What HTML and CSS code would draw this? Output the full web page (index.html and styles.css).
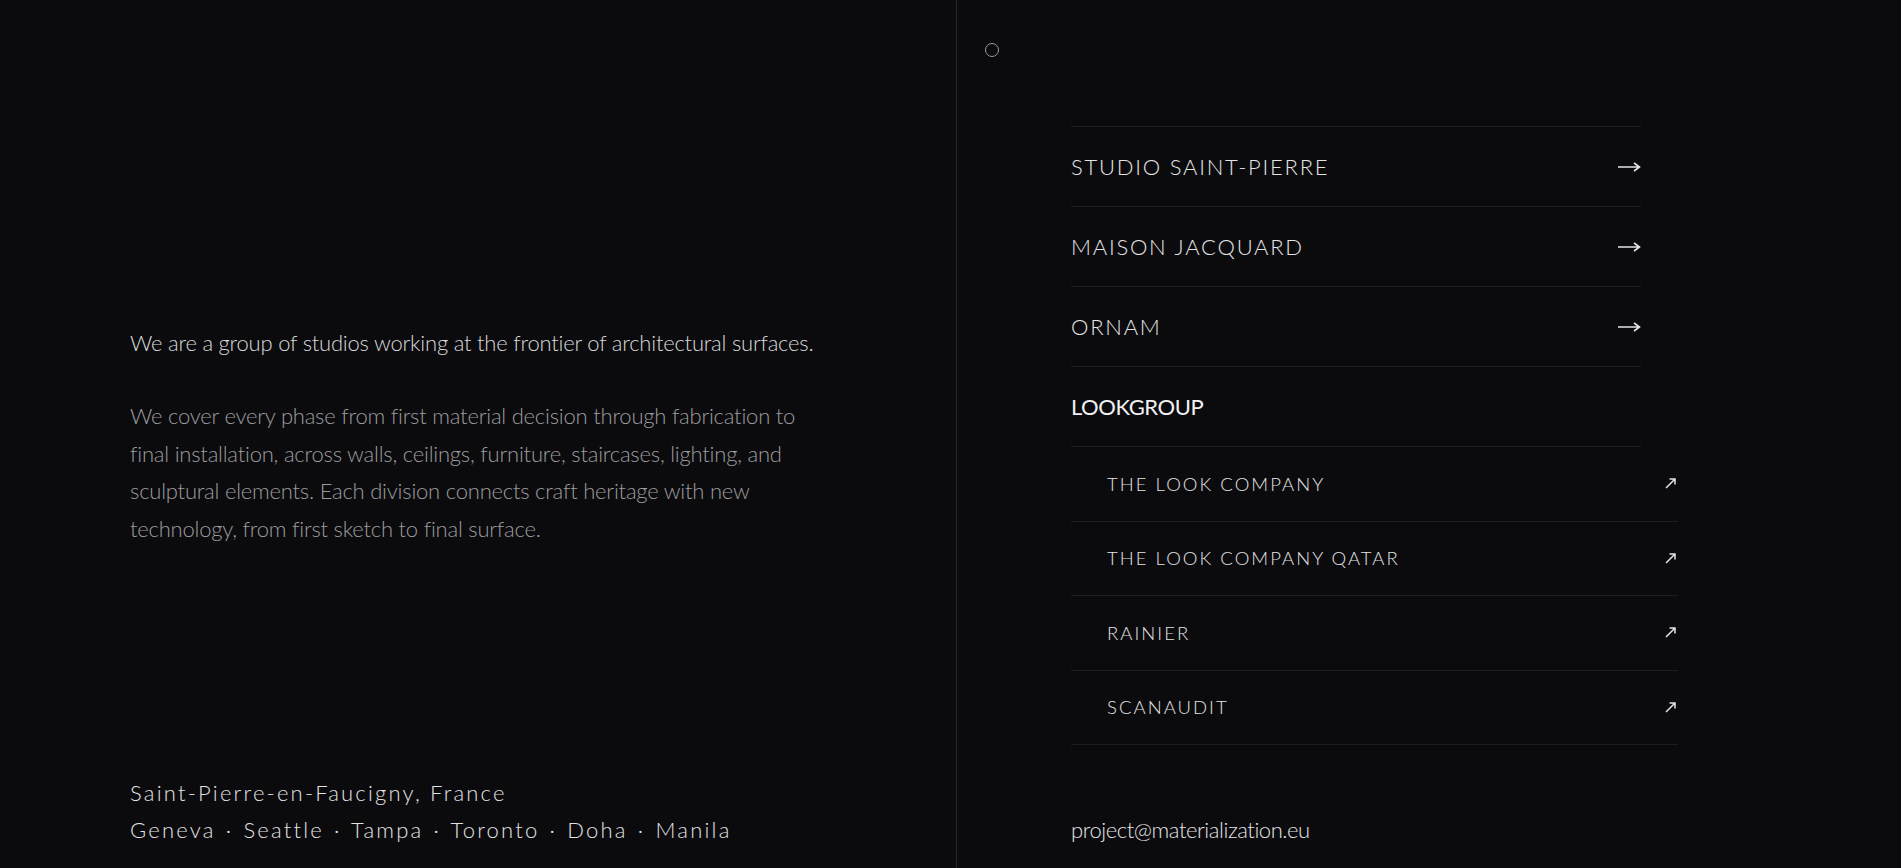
FILE: index.html
```html
<!DOCTYPE html>
<html lang="en">
<head>
<meta charset="utf-8">
<title>Materialization</title>
<link rel="stylesheet" href="styles.css">
</head>
<body>
<div class="page">
  <section class="left">
    <div class="intro">
      <p class="lead">We are a group of studios working at the frontier of architectural surfaces.</p>
      <p class="body-text">We cover every phase from first material decision through fabrication to final installation, across walls, ceilings, furniture, staircases, lighting, and sculptural elements. Each division connects craft heritage with new technology, from first sketch to final surface.</p>
    </div>
    <div class="locations">
      <div class="hq">Saint-Pierre-en-Faucigny, France</div>
      <div class="cities">Geneva · Seattle · Tampa · Toronto · Doha · Manila</div>
    </div>
  </section>
  <section class="right">
    <span class="dot"></span>
    <nav class="studios">
      <a class="studio-row" href="#"><span class="studio-name">STUDIO SAINT-PIERRE</span>
        <svg class="arrow" width="23" height="10" viewBox="0 0 23 10"><path d="M0 5H21.5M16 1L21.5 5L16 9" fill="none" stroke="#e4e4e4" stroke-width="1.6"/></svg></a>
      <a class="studio-row" href="#"><span class="studio-name">MAISON JACQUARD</span>
        <svg class="arrow" width="23" height="10" viewBox="0 0 23 10"><path d="M0 5H21.5M16 1L21.5 5L16 9" fill="none" stroke="#e4e4e4" stroke-width="1.6"/></svg></a>
      <a class="studio-row" href="#"><span class="studio-name">ORNAM</span>
        <svg class="arrow" width="23" height="10" viewBox="0 0 23 10"><path d="M0 5H21.5M16 1L21.5 5L16 9" fill="none" stroke="#e4e4e4" stroke-width="1.6"/></svg></a>
      <div class="group-row"><span class="group-name">LOOKGROUP</span></div>
      <div class="sublist">
        <a class="sub-row" href="#"><span class="sub-name">THE LOOK COMPANY</span>
          <svg class="ext" width="11" height="11" viewBox="0 0 11 11"><path d="M1 10L10 1M4.5 1H10V6.5" fill="none" stroke="#e4e4e4" stroke-width="1.5"/></svg></a>
        <a class="sub-row" href="#"><span class="sub-name">THE LOOK COMPANY QATAR</span>
          <svg class="ext" width="11" height="11" viewBox="0 0 11 11"><path d="M1 10L10 1M4.5 1H10V6.5" fill="none" stroke="#e4e4e4" stroke-width="1.5"/></svg></a>
        <a class="sub-row" href="#"><span class="sub-name">RAINIER</span>
          <svg class="ext" width="11" height="11" viewBox="0 0 11 11"><path d="M1 10L10 1M4.5 1H10V6.5" fill="none" stroke="#e4e4e4" stroke-width="1.5"/></svg></a>
        <a class="sub-row" href="#"><span class="sub-name">SCANAUDIT</span>
          <svg class="ext" width="11" height="11" viewBox="0 0 11 11"><path d="M1 10L10 1M4.5 1H10V6.5" fill="none" stroke="#e4e4e4" stroke-width="1.5"/></svg></a>
      </div>
    </nav>
    <a class="email" href="#">project@materialization.eu</a>
  </section>
</div>
</body>
</html>
```
FILE: styles.css
```css
html, body {
  margin: 0;
  padding: 0;
}
body {
  background: #0b0b0e;
  color: #e2e2e2;
  font-family: "Lato", "Liberation Sans", sans-serif;
  font-weight: 300;
  height: 868px;
  overflow: hidden;
}
a {
  color: inherit;
  text-decoration: none;
}
.page {
  display: grid;
  grid-template-columns: 957px 1fr;
  height: 868px;
}
.left {
  border-right: 1px solid #2a2a2d;
  display: flex;
  flex-direction: column;
  padding: 324px 0 20px 130px;
}
.lead {
  margin: 0;
  font-size: 22px;
  line-height: 37px;
  letter-spacing: -0.01em;
  color: #d8d8d8;
}
.body-text {
  margin: 36px 0 0;
  width: 700px;
  font-size: 22px;
  line-height: 37.5px;
  letter-spacing: -0.01em;
  color: #9c9c9e;
}
.locations {
  margin-top: auto;
  font-size: 22px;
  line-height: 37px;
  letter-spacing: 0.1em;
  color: #e2e2e2;
}
.cities {
  word-spacing: 2px;
}
.right {
  display: flex;
  flex-direction: column;
  padding: 43px 0 20px 28px;
}
.dot {
  width: 12px;
  height: 12px;
  border: 1px solid #9a9a9a;
  border-radius: 50%;
}
.studios {
  margin: 69px 0 0 86px;
  width: 570px;
  border-top: 1px solid #1d1d21;
}
.studio-row, .group-row {
  display: flex;
  align-items: center;
  justify-content: space-between;
  height: 80px;
  border-bottom: 1px solid #1d1d21;
  box-sizing: border-box;
}
.studio-name {
  font-size: 22px;
  letter-spacing: 0.08em;
  color: #e4e4e4;
}
.group-name {
  font-size: 22px;
  font-weight: 400;
  letter-spacing: -0.02em;
  color: #f2f2f2;
}
.sublist {
  width: 607px;
}
.sub-row {
  display: flex;
  align-items: center;
  justify-content: space-between;
  height: 74.5px;
  padding: 0 2px 0 36px;
  border-bottom: 1px solid #1d1d21;
  box-sizing: border-box;
}
.sub-name {
  font-size: 18.5px;
  letter-spacing: 0.11em;
  color: #e4e4e4;
}
.email {
  margin: auto 0 0 86px;
  font-size: 22px;
  line-height: 37px;
  letter-spacing: -0.02em;
  color: #e4e4e4;
}
```
